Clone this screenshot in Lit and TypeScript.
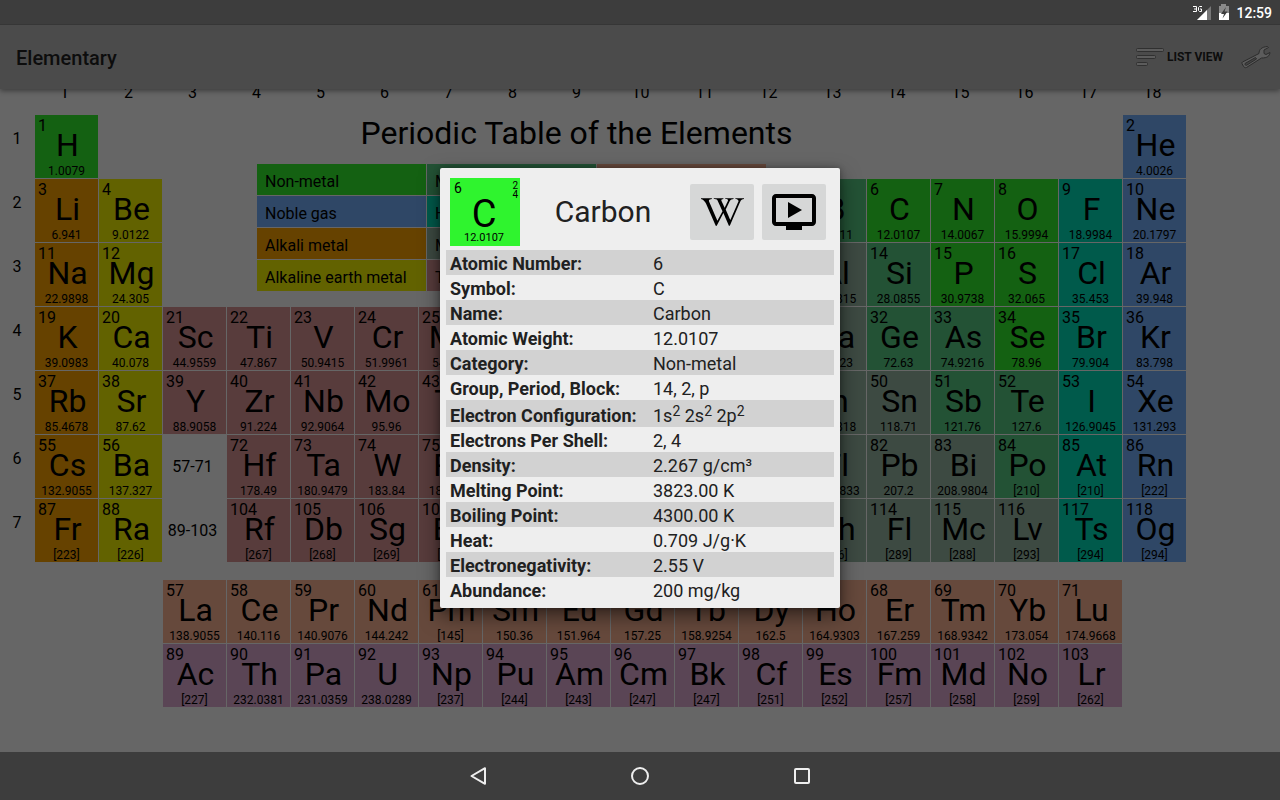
import { LitElement, html, css, svg } from "lit";
import { customElement, state } from "lit/decorators.js";
import { classMap } from "lit/directives/class-map.js";

type Category =
  | "nonmetal" | "noble" | "alkali" | "alkaline" | "metalloid"
  | "halogen" | "metal" | "transition" | "lanthanide" | "actinide";

interface Placed {
  n: number;
  symbol: string;
  weight: string;
  category: Category;
  row: number;
  col: number;
}

const CODES: Record<string, Category> = {
  n: "nonmetal", g: "noble", a: "alkali", e: "alkaline", d: "metalloid",
  h: "halogen", m: "metal", t: "transition", l: "lanthanide", c: "actinide",
};

// Each run: grid row, first column, first atomic number, then "Symbol weight code" entries.
const RUNS: [number, number, number, string][] = [
  [1, 1, 1, "H 1.0079 n"],
  [1, 18, 2, "He 4.0026 g"],
  [2, 1, 3, "Li 6.941 a,Be 9.0122 e"],
  [2, 13, 5, "B 10.811 d,C 12.0107 n,N 14.0067 n,O 15.9994 n,F 18.9984 h,Ne 20.1797 g"],
  [3, 1, 11, "Na 22.9898 a,Mg 24.305 e"],
  [3, 13, 13, "Al 26.9815 m,Si 28.0855 d,P 30.9738 n,S 32.065 n,Cl 35.453 h,Ar 39.948 g"],
  [4, 1, 19, "K 39.0983 a,Ca 40.078 e,Sc 44.9559 t,Ti 47.867 t,V 50.9415 t,Cr 51.9961 t,Mn 54.938 t,Fe 55.845 t,Co 58.9332 t,Ni 58.6934 t,Cu 63.546 t,Zn 65.38 t,Ga 69.723 m,Ge 72.63 d,As 74.9216 d,Se 78.96 n,Br 79.904 h,Kr 83.798 g"],
  [5, 1, 37, "Rb 85.4678 a,Sr 87.62 e,Y 88.9058 t,Zr 91.224 t,Nb 92.9064 t,Mo 95.96 t,Tc [98] t,Ru 101.07 t,Rh 102.9055 t,Pd 106.42 t,Ag 107.8682 t,Cd 112.411 t,In 114.818 m,Sn 118.71 m,Sb 121.76 d,Te 127.6 d,I 126.9045 h,Xe 131.293 g"],
  [6, 1, 55, "Cs 132.9055 a,Ba 137.327 e"],
  [6, 4, 72, "Hf 178.49 t,Ta 180.9479 t,W 183.84 t,Re 186.207 t,Os 190.23 t,Ir 192.217 t,Pt 195.084 t,Au 196.9666 t,Hg 200.59 t,Tl 204.3833 m,Pb 207.2 m,Bi 208.9804 m,Po [210] d,At [210] h,Rn [222] g"],
  [7, 1, 87, "Fr [223] a,Ra [226] e"],
  [7, 4, 104, "Rf [267] t,Db [268] t,Sg [269] t,Bh [270] t,Hs [269] t,Mt [278] t,Ds [281] t,Rg [281] t,Cn [285] t,Nh [286] m,Fl [289] m,Mc [288] m,Lv [293] m,Ts [294] h,Og [294] g"],
  [9, 3, 57, "La 138.9055 l,Ce 140.116 l,Pr 140.9076 l,Nd 144.242 l,Pm [145] l,Sm 150.36 l,Eu 151.964 l,Gd 157.25 l,Tb 158.9254 l,Dy 162.5 l,Ho 164.9303 l,Er 167.259 l,Tm 168.9342 l,Yb 173.054 l,Lu 174.9668 l"],
  [10, 3, 89, "Ac [227] c,Th 232.0381 c,Pa 231.0359 c,U 238.0289 c,Np [237] c,Pu [244] c,Am [243] c,Cm [247] c,Bk [247] c,Cf [251] c,Es [252] c,Fm [257] c,Md [258] c,No [259] c,Lr [262] c"],
];

const ELEMENTS: Placed[] = RUNS.flatMap(([row, col, first, list]) =>
  list.split(",").map((entry, i) => {
    const [symbol, weight, code] = entry.split(" ");
    return { n: first + i, symbol, weight, category: CODES[code], row, col: col + i };
  })
);

const LEGEND: [string, Category][] = [
  ["Non-metal", "nonmetal"], ["Noble gas", "noble"], ["Alkali metal", "alkali"], ["Alkaline earth metal", "alkaline"],
  ["Metalloid", "metalloid"], ["Halogen", "halogen"], ["Metal", "metal"], ["Transition metal", "transition"],
  ["Lanthanide", "lanthanide"], ["Actinide", "actinide"],
];

const sup2 = html`<sup>2</sup>`;

const FACTS: [string, unknown][] = [
  ["Atomic Number:", "6"],
  ["Symbol:", "C"],
  ["Name:", "Carbon"],
  ["Atomic Weight:", "12.0107"],
  ["Category:", "Non-metal"],
  ["Group, Period, Block:", "14, 2, p"],
  ["Electron Configuration:", html`1s${sup2} 2s${sup2} 2p${sup2}`],
  ["Electrons Per Shell:", "2, 4"],
  ["Density:", "2.267 g/cm³"],
  ["Melting Point:", "3823.00 K"],
  ["Boiling Point:", "4300.00 K"],
  ["Heat:", "0.709 J/g·K"],
  ["Electronegativity:", "2.55 V"],
  ["Abundance:", "200 mg/kg"],
];

const palette = css`
  .nonmetal { background: #146112; }
  .noble { background: #2f4766; }
  .alkali { background: #664200; }
  .alkaline { background: #626200; }
  .metalloid { background: #235235; }
  .halogen { background: #005a4b; }
  .metal { background: #3d4a42; }
  .transition { background: #583c3c; }
  .lanthanide { background: #66493c; }
  .actinide { background: #5a4555; }
`;

@customElement("periodic-table")
export class PeriodicTable extends LitElement {
  static styles = [
    palette,
    css`
      :host { display: block; color: #000; font-size: 16px; }
      .grid {
        display: grid;
        grid-template-columns: 34px repeat(18, 63px);
        grid-template-rows: 32px repeat(7, 63px) 16px repeat(2, 63px);
        gap: 1px;
      }
      .label { line-height: 20px; text-align: center; padding-right: 4px; }
      .col { grid-row: 1; padding-top: 1px; }
      .period { grid-column: 1; padding: 14px 0 0; }
      .range { grid-column: 4; align-self: center; }
      .title {
        grid-area: 2 / 4 / 3 / 17;
        margin: 0;
        padding-right: 4px;
        font-size: 32px;
        font-weight: 400;
        line-height: 36px;
        text-align: center;
      }
      .legend {
        grid-area: 2 / 5 / 5 / 14;
        display: grid;
        grid-auto-flow: column;
        grid-template-rows: repeat(4, 31px);
        grid-auto-columns: 169px;
        gap: 1px;
        margin: 0;
        padding: 49px 0 0 30px;
        list-style: none;
      }
      .legend li { padding: 2px 8px 0; line-height: 31px; height: 29px; }
      .cell {
        display: flex;
        flex-direction: column;
        border: 0;
        padding: 3px 0 1px;
        color: inherit;
        font: inherit;
        min-width: 0;
      }
      .num { padding-left: 3px; line-height: 16px; align-self: flex-start; }
      .sym { padding-left: 2px; font-size: 32px; line-height: 22px; margin-bottom: auto; align-self: stretch; text-align: center; }
      .wt { font-size: 12px; line-height: 12px; align-self: stretch; text-align: center; }
    `,
  ];

  render() {
    const cols = Array.from({ length: 18 }, (_, i) => i + 1);
    const periods = [1, 2, 3, 4, 5, 6, 7];
    return html`
      <div class="grid">
        ${cols.map((c) => html`<div class="label col" style="grid-column:${c + 1}">${c}</div>`)}
        ${periods.map((p) => html`<div class="label period" style="grid-row:${p + 1}">${p}</div>`)}
        <h2 class="title">Periodic Table of the Elements</h2>
        <ul class="legend">
          ${LEGEND.map(([name, cat]) => html`<li class=${cat}>${name}</li>`)}
        </ul>
        <div class="label range" style="grid-row:7">57-71</div>
        <div class="label range" style="grid-row:8">89-103</div>
        ${ELEMENTS.map(
          (e) => html`<button
            class=${classMap({ cell: true, [e.category]: true })}
            style="grid-area:${e.row + 1} / ${e.col + 1}"
          ><span class="num">${e.n}</span><span class="sym">${e.symbol}</span><span class="wt">${e.weight}</span></button>`
        )}
      </div>
    `;
  }
}

@customElement("element-details")
export class ElementDetails extends LitElement {
  static styles = css`
    :host {
      display: block;
      width: 400px;
      box-sizing: border-box;
      padding: 10px 6px 6px;
      background: #eee;
      border-radius: 2px;
      box-shadow: 0 8px 20px rgba(0, 0, 0, 0.5), 0 0 6px rgba(0, 0, 0, 0.3);
      color: #212121;
    }
    header { display: flex; align-items: center; gap: 8px; padding: 0 8px 4px 4px; }
    .tile {
      display: grid;
      grid-template: 49px 19px / 1fr;
      width: 70px;
      height: 68px;
      background: #2ff42e;
      color: #000;
    }
    .num, .shells, .sym { grid-area: 1 / 1; }
    .num { padding: 2px 4px; font-size: 14px; line-height: 16px; }
    .shells { padding: 3px 2px; font-size: 10px; line-height: 9px; text-align: right; }
    .sym { align-self: end; padding-right: 2px; font-size: 38px; line-height: 26px; text-align: center; }
    .wt { padding: 4px 2px 0 0; font-size: 11px; line-height: 14px; text-align: center; }
    h1 { flex: 1; margin: 0; padding-right: 4px; font-size: 30px; font-weight: 400; line-height: 36px; text-align: center; }
    .action {
      display: grid;
      place-items: center;
      width: 64px;
      height: 56px;
      padding: 0;
      border: 0;
      border-radius: 2px;
      background: #d6d7d7;
    }
    table { width: 100%; border-collapse: collapse; font-size: 18px; line-height: 23px; }
    th, td { padding: 2px 0 0; text-align: left; white-space: nowrap; }
    th { width: 187px; padding-left: 4px; padding-right: 16px; font-weight: 700; }
    tr:nth-child(odd) { background: #d2d2d2; }
    .tall th, .tall td { padding-top: 4px; }
    sup { font-size: 14px; line-height: 0; vertical-align: 6px; }
  `;

  render() {
    return html`
      <header>
        <div class="tile">
          <span class="num">6</span>
          <span class="shells">2<br />4</span>
          <span class="sym">C</span>
          <span class="wt">12.0107</span>
        </div>
        <h1>Carbon</h1>
        <button class="action" aria-label="Wikipedia">
          <svg width="43" height="28" viewBox="2 6 20 13">
            <path d="M14.97,18.95L12.41,12.92C11.39,14.91 10.27,17 9.31,18.95C9.3,18.96 8.84,18.95 8.84,18.95C7.37,15.5 5.85,12.1 4.37,8.68C4.03,7.84 2.83,6.5 2,6.5C2,6.4 2,6.18 2,6.05H7.06V6.5C6.46,6.5 5.44,6.9 5.7,7.55C6.42,9.09 8.94,15.06 9.63,16.58C10.1,15.64 11.43,13.16 12,12.11C11.55,11.23 10.13,7.93 9.71,7.11C9.39,6.57 8.58,6.5 7.96,6.5C7.96,6.35 7.97,6.25 7.96,6.06L12.42,6.07V6.47C11.81,6.5 11.24,6.71 11.5,7.29C12.1,8.53 12.45,9.42 13,10.57C13.17,10.23 14.07,8.38 14.5,7.41C14.76,6.76 14.37,6.51 13.29,6.5C13.3,6.38 13.3,6.17 13.3,6.07C14.69,6.06 16.78,6.06 17.15,6.05V6.47C16.44,6.5 15.71,6.88 15.33,7.46L13.5,11.3C13.68,11.81 15.46,15.76 15.65,16.2L19.5,7.37C19.2,6.65 18.34,6.5 18,6.5C18,6.37 18,6.2 18,6.05L22,6.08V6.1L22,6.5C21.12,6.5 20.57,7 20.25,7.75C19.45,9.54 17,15.24 15.4,18.95C15.4,18.95 14.97,18.95 14.97,18.95Z" />
          </svg>
        </button>
        <button class="action" aria-label="Video">
          <svg width="48" height="48" viewBox="0 0 24 24">
            <path d="M21 3H3c-1.11 0-2 .89-2 2v12c0 1.1.89 2 2 2h5v2h8v-2h5c1.1 0 1.99-.9 1.99-2L23 5c0-1.11-.9-2-2-2zm0 14H3V5h18v12zm-5-6l-7 4V7z" />
          </svg>
        </button>
      </header>
      <table>
        <tbody>
          ${FACTS.map(
            ([name, value]) => html`<tr class=${classMap({ tall: name.startsWith("Electron C") })}>
              <th scope="row">${name}</th><td>${value}</td>
            </tr>`
          )}
        </tbody>
      </table>
    `;
  }
}

const NAV = [
  { name: "Back", shape: svg`<path d="M19 4.200V19.800L5.500 12Z" stroke-linejoin="round" />` },
  { name: "Home", shape: svg`<circle cx="12" cy="12" r="8" />` },
  { name: "Recent apps", shape: svg`<rect x="5" y="5" width="14" height="14" rx="1" />` },
];

@customElement("app-root")
export class AppRoot extends LitElement {
  static styles = css`
    :host {
      display: flex;
      flex-direction: column;
      height: 100vh;
      background: #666;
      font-family: Roboto, "Liberation Sans", sans-serif;
    }
    .status {
      display: flex;
      justify-content: flex-end;
      align-items: center;
      height: 24px;
      padding-right: 8px;
      background: #3d3d3d;
      border-bottom: 1px solid #363636;
      color: #fff;
      font-size: 14px;
      font-weight: 500;
      line-height: 24px;
    }
    .clock { padding: 2px 0 0 6px; }
    main { position: relative; flex: 1; min-height: 0; overflow: hidden; }
    .appbar {
      position: relative;
      z-index: 1;
      display: flex;
      align-items: center;
      height: 64px;
      padding: 0 9px 0 16px;
      background: #4b4b4b;
      box-shadow: 0 2px 5px rgba(0, 0, 0, 0.4);
      color: #0d0d0d;
    }
    .name { flex: 1; font-size: 20px; font-weight: 500; line-height: 24px; padding-top: 2px; }
    .tool {
      display: flex;
      align-items: center;
      gap: 3px;
      padding: 0;
      border: 0;
      background: none;
      color: inherit;
      font: 700 12px/16px Roboto, sans-serif;
    }
    .tools { display: flex; gap: 18px; }
    periodic-table { margin-top: -7px; }
    .overlay { position: absolute; inset: 0; z-index: 2; display: grid; place-items: center; padding-bottom: 1px; }
    .nav { display: flex; justify-content: center; height: 48px; background: #3d3d3d; }
    .nav button { display: grid; place-items: center; width: 162px; padding: 0; border: 0; background: none; }
    .nav svg { fill: none; stroke: #eee; stroke-width: 2; }
  `;

  @state() private detailsOpen = true;

  render() {
    return html`
      <div class="status">
        <svg width="38" height="24" viewBox="0 0 38 24">
          <g fill="none" stroke="#fff">
            <path d="M1 6.5H4.5V11.5H1M2 9H4.5" />
            <path d="M10 6.5H7.5L6.5 7.5V10.5L7.5 11.5H9.5V9H8" />
          </g>
          <path d="M19 6V20H5Z" fill="#777" />
          <path d="M15 10V20H5Z" fill="#fff" />
          <path d="M29 4H34V6H37V20H27V6H29Z" fill="#8a8a8a" />
          <path d="M27 13H37V20H27Z" fill="#fff" />
          <path d="M34 7L29 14H32L30.500 18.500L35.500 11.500H32.500Z" fill="#3d3d3d" />
        </svg>
        <span class="clock">12:59</span>
      </div>
      <main>
        <div class="appbar">
          <span class="name">Elementary</span>
          <div class="tools">
            <button class="tool">
              <svg width="28" height="20" viewBox="0 0 28 20">
                <g fill="#5c5c5c" stroke="#303030">
                  <rect x="0.5" y="1.500" width="27" height="3" rx="1" />
                  <rect x="0.5" y="8.500" width="19" height="3" rx="1" />
                  <rect x="0.5" y="15.500" width="11" height="3" rx="1" />
                </g>
              </svg>
              LIST VIEW
            </button>
            <button class="tool" aria-label="Settings">
              <svg width="30" height="24" viewBox="0 0 30 24">
                <g fill="#5c5c5c" stroke="#2c2c2c" stroke-linejoin="round">
                  <path d="M1.500 17L18 8.500C18 4.500 20.500 2 26.500 1.500L27.500 2.500L23 5V8.500L25 9.500L29 7.500C28.500 11 26.500 13 20.500 13L5.500 22.500C4 23 3 22.300 2.500 21.300L1.200 19C.8 18.200.8 17.500 1.500 17Z" />
                  <path d="M4 18.500L14.500 12.500L15.500 14L5.500 20.300C4.500 20.500 3.500 19.500 4 18.500Z" fill="#444" />
                </g>
              </svg>
            </button>
          </div>
        </div>
        <periodic-table></periodic-table>
        ${this.detailsOpen
          ? html`<div class="overlay" @click=${this.dismiss}>
              <element-details role="dialog" aria-label="Carbon"></element-details>
            </div>`
          : null}
      </main>
      <nav class="nav">
        ${NAV.map(
          (b) => html`<button aria-label=${b.name}><svg width="24" height="24" viewBox="0 0 24 24">${b.shape}</svg></button>`
        )}
      </nav>
    `;
  }

  private dismiss(event: Event) {
    if (event.target === event.currentTarget) this.detailsOpen = false;
  }
}
